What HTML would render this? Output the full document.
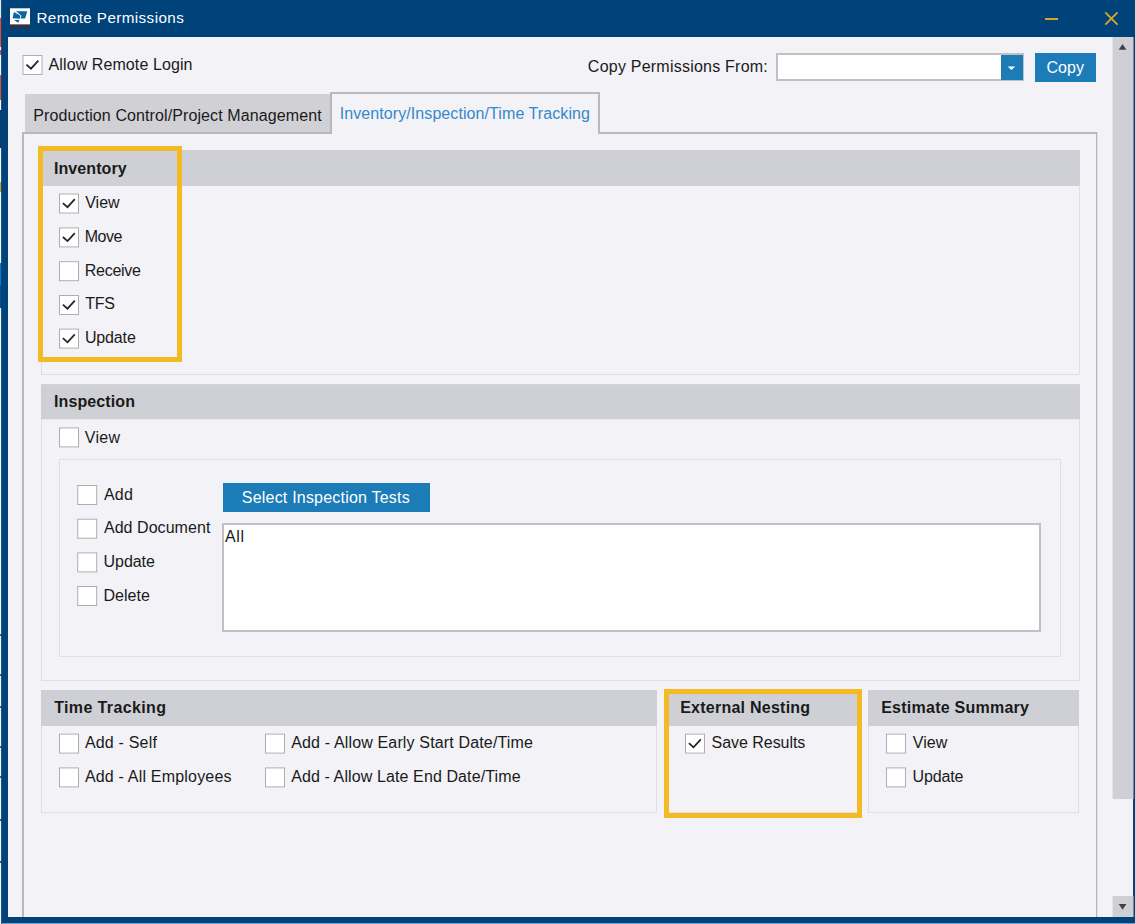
<!DOCTYPE html>
<html><head><meta charset="utf-8"><title>Remote Permissions</title>
<style>
html,body{margin:0;padding:0;}
body{width:1135px;height:924px;overflow:hidden;background:#00427a;position:relative;font-family:"Liberation Sans",sans-serif;font-size:16px;color:#1a1a1a;}
.a{position:absolute;}
.t{position:absolute;white-space:nowrap;line-height:20px;height:20px;}
.b{font-weight:bold;}
.cb{position:absolute;left:0;top:0;width:18px;height:18px;border:1px solid #adadb1;background:#fff;}
.cb svg{position:absolute;left:-1px;top:-1px;width:20px;height:20px;}
.grp{position:absolute;border:1px solid #dfdfe3;box-sizing:border-box;}
.hdr{position:absolute;background:#cfd0d5;}
.hl{position:absolute;border:5px solid #f3ba23;box-sizing:border-box;}
.btn{position:absolute;background:#1b7cb7;}
</style></head><body>
<!-- left edge strip -->
<div class="a" style="left:0;top:0px;width:2px;height:18px;background:#e6e6e8"></div>
<div class="a" style="left:0;top:18px;width:2px;height:29px;background:#e04a40"></div>
<div class="a" style="left:0;top:47px;width:2px;height:3px;background:#f4f4f4"></div>
<div class="a" style="left:0;top:50px;width:2px;height:5px;background:#e04a40"></div>
<div class="a" style="left:0;top:55px;width:2px;height:20px;background:#f4f4f4"></div>
<div class="a" style="left:0;top:75px;width:2px;height:25px;background:#e04a40"></div>
<div class="a" style="left:0;top:100px;width:2px;height:10px;background:#f4f4f4"></div>
<div class="a" style="left:0;top:110px;width:2px;height:38px;background:#0a3f74"></div>
<div class="a" style="left:0;top:148px;width:2px;height:34px;background:#f4f4f4"></div>
<div class="a" style="left:0;top:182px;width:2px;height:10px;background:#c9a030"></div>
<div class="a" style="left:0;top:192px;width:2px;height:71px;background:#f0f0f2"></div>
<div class="a" style="left:0;top:263px;width:2px;height:22px;background:#0a78d0"></div>
<div class="a" style="left:0;top:285px;width:2px;height:23px;background:#0a4f8c"></div>
<div class="a" style="left:0;top:308px;width:2px;height:616px;background:#f0f0f3"></div>
<div class="a" style="left:0;top:634px;width:2px;height:2px;background:#555a66"></div>
<div class="a" style="left:0;top:674px;width:2px;height:2px;background:#555a66"></div>
<div class="a" style="left:0;top:706px;width:2px;height:2px;background:#555a66"></div>
<div class="a" style="left:0;top:746px;width:2px;height:2px;background:#555a66"></div>
<div class="a" style="left:0;top:776px;width:2px;height:2px;background:#555a66"></div>
<div class="a" style="left:0;top:819px;width:2px;height:2px;background:#555a66"></div>
<div class="a" style="left:0;top:861px;width:2px;height:2px;background:#555a66"></div>
<div class="a" style="left:1px;top:0;width:1px;height:924px;background:rgba(0,66,122,0.88)"></div>

<!-- title bar -->
<svg class="a" style="left:10px;top:8px;width:20px;height:21px" viewBox="10 8 20 21">
<rect x="10" y="8.3" width="20.1" height="16.3" fill="#fff"/>
<rect x="10" y="24.6" width="20.1" height="3.7" fill="#35323f"/>
<polygon points="16.0,11.2 27.3,11.3 25.1,18.6 21.0,18.6 21.2,15.4" fill="#0b65a5"/>
<polygon points="13.9,12.0 20.2,15.4 20.2,18.7 12.6,18.3" fill="#0b65a5"/>
<polygon points="14.2,20.1 19.5,20.1 18.1,22.8" fill="#0b65a5"/>
</svg>
<div class="t" style="left:36.47px;top:8px;letter-spacing:0.423px;color:#fff;font-size:15.2px;">Remote Permissions</div>
<div class="a" style="left:1045px;top:18px;width:13px;height:2px;background:#d8a520"></div>
<svg class="a" style="left:1103px;top:10px;width:17px;height:17px" viewBox="0 0 17 17"><path d="M2.3 2.3 L14.5 14.7 M14.5 2.3 L2.3 14.7" stroke="#e0ac1f" stroke-width="1.7" fill="none"/></svg>

<!-- content -->
<div class="a" style="left:8px;top:37px;width:1125px;height:880px;background:#f2f2f7"></div>

<!-- scrollbar -->
<div class="a" style="left:0;transform:translateX(1112.6px);top:37px;width:21.25px;height:762.3px;background:#cfd0d5"></div>
<div class="a" style="left:0;transform:translateX(1112.6px);top:896px;width:21.25px;height:21px;background:#cfd0d5"></div>
<svg class="a" style="left:1113px;top:37px;width:20px;height:20px" viewBox="0 0 20 20"><polygon points="5.7,12.8 13.4,12.8 9.55,7" fill="#404045"/></svg>
<svg class="a" style="left:1113px;top:896px;width:20px;height:21px" viewBox="0 0 20 21"><polygon points="5.7,8 13.4,8 9.55,13.8" fill="#404045"/></svg>

<!-- top row -->
<div class="cb" style="transform:translate(22.5px,55px)"><svg viewBox="0 0 20 20"><path d="M3.9 9.6 L8.5 13.7 L15.8 5.7" stroke="#262626" stroke-width="1.8" fill="none"/></svg></div>
<div class="t" style="left:48.61px;top:55px;letter-spacing:0.089px;">Allow Remote Login</div>
<div class="t" style="left:587.87px;top:57px;letter-spacing:0.226px;">Copy Permissions From:</div>
<div class="a" style="left:776px;top:53.2px;width:247.5px;height:27.8px;border:2px solid #c1c1c4;background:#fff;box-sizing:border-box"></div>
<div class="a" style="left:1001.4px;top:54.8px;width:21.2px;height:24.8px;background:#1b7cb7"></div>
<svg class="a" style="left:1001px;top:55px;width:22px;height:25px" viewBox="0 0 22 25"><polygon points="6.7,11.4 14.2,11.4 10.45,14.9" fill="#fff"/></svg>
<div class="btn" style="left:1035px;top:53.3px;width:61px;height:28.7px"></div>
<div class="t" style="left:1046.57px;top:58px;letter-spacing:-0.010px;color:#fff;">Copy</div>

<!-- tabs -->
<div class="a" style="left:22px;top:132px;width:1075px;height:2px;background:#b9b9bc"></div>
<div class="a" style="left:22px;top:132px;width:2px;height:785px;background:#b9b9bc"></div>
<div class="a" style="left:0;transform:translateX(1096.2px);top:132px;width:1.4px;height:785px;background:#a6a6ab"></div>
<div class="a" style="left:25px;top:94px;width:305px;height:38px;background:#d0d0d5"></div>
<div class="t" style="left:33.32px;top:106px;letter-spacing:0.104px;">Production Control/Project Management</div>
<div class="a" style="left:330px;top:92px;width:269.5px;height:42px;border:2px solid #b9b9bc;border-bottom:none;background:#f2f2f7;box-sizing:border-box"></div>
<div class="t" style="left:339.73px;top:104px;letter-spacing:0.082px;color:#3588cb;">Inventory/Inspection/Time Tracking</div>

<!-- Inventory -->
<div class="grp" style="left:41px;top:150px;width:1039px;height:225px"></div>
<div class="hdr" style="left:41px;top:150px;width:1039px;height:36px"></div>
<div class="t b" style="left:54.01px;top:159px;letter-spacing:0.076px;">Inventory</div>
<div class="cb" style="transform:translate(59px,193.5px)"><svg viewBox="0 0 20 20"><path d="M3.9 9.6 L8.5 13.7 L15.8 5.7" stroke="#262626" stroke-width="1.8" fill="none"/></svg></div>
<div class="t" style="left:85.26px;top:193px;letter-spacing:-0.022px;">View</div>
<div class="cb" style="transform:translate(59px,227.4px)"><svg viewBox="0 0 20 20"><path d="M3.9 9.6 L8.5 13.7 L15.8 5.7" stroke="#262626" stroke-width="1.8" fill="none"/></svg></div>
<div class="t" style="left:84.82px;top:227px;letter-spacing:-0.553px;">Move</div>
<div class="cb" style="transform:translate(59px,261.2px)"></div>
<div class="t" style="left:84.82px;top:261px;letter-spacing:-0.283px;">Receive</div>
<div class="cb" style="transform:translate(59px,295px)"><svg viewBox="0 0 20 20"><path d="M3.9 9.6 L8.5 13.7 L15.8 5.7" stroke="#262626" stroke-width="1.8" fill="none"/></svg></div>
<div class="t" style="left:85.16px;top:294px;letter-spacing:-0.248px;">TFS</div>
<div class="cb" style="transform:translate(59px,328.6px)"><svg viewBox="0 0 20 20"><path d="M3.9 9.6 L8.5 13.7 L15.8 5.7" stroke="#262626" stroke-width="1.8" fill="none"/></svg></div>
<div class="t" style="left:84.90px;top:328px;letter-spacing:-0.135px;">Update</div>
<div class="hl" style="left:38px;top:146px;width:144px;height:216px"></div>

<!-- Inspection -->
<div class="grp" style="left:41px;top:384px;width:1039px;height:297px"></div>
<div class="hdr" style="left:41px;top:0;transform:translateY(384.25px);width:1039px;height:35.25px"></div>
<div class="t b" style="left:53.96px;top:392px;letter-spacing:0.117px;">Inspection</div>
<div class="cb" style="transform:translate(59px,427.4px)"></div>
<div class="t" style="left:84.86px;top:428px;letter-spacing:0.245px;">View</div>
<div class="grp" style="left:59px;top:458.6px;width:1002px;height:198.6px"></div>
<div class="cb" style="transform:translate(77.2px,485px)"></div>
<div class="t" style="left:103.91px;top:485px;letter-spacing:0.263px;">Add</div>
<div class="cb" style="transform:translate(77.2px,518.7px)"></div>
<div class="t" style="left:103.91px;top:518px;letter-spacing:0.055px;">Add Document</div>
<div class="cb" style="transform:translate(77.2px,552.4px)"></div>
<div class="t" style="left:103.50px;top:552px;letter-spacing:-0.035px;">Update</div>
<div class="cb" style="transform:translate(77.2px,586px)"></div>
<div class="t" style="left:103.42px;top:586px;letter-spacing:0.038px;">Delete</div>
<div class="btn" style="left:222.5px;top:483.3px;width:207px;height:28.7px"></div>
<div class="t" style="left:241.79px;top:488px;letter-spacing:0.208px;color:#fff;">Select Inspection Tests</div>
<div class="a" style="left:222.2px;top:523px;width:819px;height:108.6px;border:2px solid #c1c1c4;background:#fff;box-sizing:border-box"></div>
<div class="t" style="left:224.91px;top:527px;letter-spacing:0.680px;">All</div>

<!-- Time Tracking -->
<div class="grp" style="left:41px;top:690px;width:616px;height:122.5px"></div>
<div class="hdr" style="left:41px;top:690px;width:616px;height:35.75px"></div>
<div class="t b" style="left:54.19px;top:698px;letter-spacing:0.369px;">Time Tracking</div>
<div class="cb" style="transform:translate(59px,733.6px)"></div>
<div class="t" style="left:84.91px;top:733px;letter-spacing:0.185px;">Add - Self</div>
<div class="cb" style="transform:translate(59px,767.4px)"></div>
<div class="t" style="left:84.91px;top:767px;letter-spacing:0.192px;">Add - All Employees</div>
<div class="cb" style="transform:translate(265px,733.6px)"></div>
<div class="t" style="left:291.16px;top:733px;letter-spacing:0.155px;">Add - Allow Early Start Date/Time</div>
<div class="cb" style="transform:translate(265px,767.4px)"></div>
<div class="t" style="left:291.16px;top:767px;letter-spacing:0.110px;">Add - Allow Late End Date/Time</div>

<!-- External Nesting -->
<div class="grp" style="left:667px;top:690px;width:192px;height:122.5px"></div>
<div class="hdr" style="left:667px;top:690px;width:192px;height:35.75px"></div>
<div class="t b" style="left:680.21px;top:698px;letter-spacing:0.243px;">External Nesting</div>
<div class="cb" style="transform:translate(685px,733.6px)"><svg viewBox="0 0 20 20"><path d="M3.9 9.6 L8.5 13.7 L15.8 5.7" stroke="#262626" stroke-width="1.8" fill="none"/></svg></div>
<div class="t" style="left:711.54px;top:733px;letter-spacing:-0.039px;">Save Results</div>
<div class="hl" style="left:664px;top:689px;width:198px;height:129px"></div>

<!-- Estimate Summary -->
<div class="grp" style="left:868px;top:690px;width:211px;height:122.5px"></div>
<div class="hdr" style="left:868px;top:690px;width:211px;height:35.75px"></div>
<div class="t b" style="left:881.21px;top:698px;letter-spacing:0.243px;">Estimate Summary</div>
<div class="cb" style="transform:translate(886px,733.6px)"></div>
<div class="t" style="left:912.86px;top:733px;letter-spacing:-0.005px;">View</div>
<div class="cb" style="transform:translate(886px,767.4px)"></div>
<div class="t" style="left:912.50px;top:767px;letter-spacing:-0.135px;">Update</div>

<!-- window borders on top -->
<div class="a" style="left:0;transform:translateX(1133.85px);top:0;width:2px;height:924px;background:#00427a"></div>
<div class="a" style="left:2px;top:917px;width:1133px;height:7px;background:#00427a"></div>
<div class="a" style="left:2px;top:923px;width:1133px;height:1px;background:#7d9cbf"></div>
</body></html>
